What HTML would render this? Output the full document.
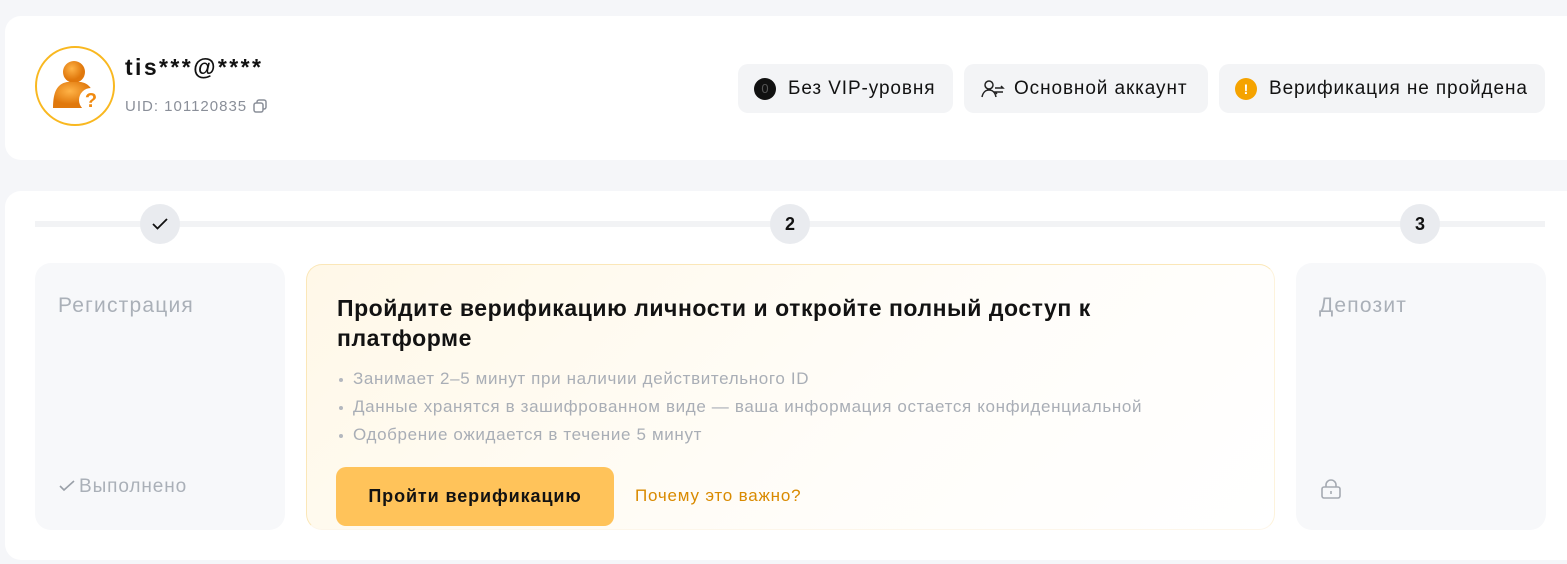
<!DOCTYPE html>
<html><head><meta charset="utf-8"><style>
*{box-sizing:border-box;margin:0;padding:0}
body{width:1567px;height:564px;background:#f5f6f9;font-family:"Liberation Sans",sans-serif;position:relative;overflow:hidden;color:#121212}
.card{position:absolute;background:#fff;border-radius:16px}
.badge{position:absolute;top:64px;height:49px;background:#f3f4f6;border-radius:10px;font-size:19px;letter-spacing:0.9px;display:flex;align-items:center;padding-left:16px}
.abs{position:absolute}
.circ{position:absolute;top:204px;width:40px;height:40px;border-radius:50%;background:#e9ebef;display:flex;align-items:center;justify-content:center;font-size:18px;font-weight:bold}
.box{position:absolute;top:263px;height:267px;background:#f7f8fa;border-radius:16px}
.g{color:#aab0b8}
li{list-style:none;position:relative;padding-left:16px;height:28px;line-height:28px}
li:before{content:"";position:absolute;left:2px;top:13px;width:4px;height:4px;border-radius:50%;background:#b4b8bf}
</style></head><body>
<div class="card" style="left:5px;top:16px;width:1580px;height:144px"></div>
<div class="abs" style="left:35px;top:46px;width:80px;height:80px;border-radius:50%;border:2px solid #f9b820;background:#fff"></div>
<svg class="abs" style="left:45px;top:56px" width="62" height="62" viewBox="0 0 62 62">
<defs><radialGradient id="o" cx="40%" cy="35%"><stop offset="0" stop-color="#ffb347"/><stop offset="1" stop-color="#e0780c"/></radialGradient></defs>
<circle cx="29" cy="16" r="11" fill="url(#o)"/><path d="M22 26 L36 26 C46 28 50 36 50 52 L8 52 C8 36 12 28 22 26 Z" fill="url(#o)"/>
<circle cx="46" cy="44" r="12" fill="#fff"/><text x="46" y="51" text-anchor="middle" font-size="20" font-weight="bold" fill="#f08a10" font-family="Liberation Sans">?</text></svg>
<div class="abs" style="left:125px;top:54px;font-size:23px;font-weight:bold;letter-spacing:2.4px">tis***@****</div>
<div class="abs" style="left:125px;top:98px;font-size:15px;color:#8a8f99;letter-spacing:1px">UID: 101120835 <svg width="16" height="16" viewBox="0 0 16 16" style="vertical-align:-3px"><rect x="5" y="2" width="9" height="9" rx="2" fill="none" stroke="#8a8f99" stroke-width="1.5"/><rect x="2" y="5" width="9" height="9" rx="2" fill="#fff" stroke="#8a8f99" stroke-width="1.5"/></svg></div>
<div class="badge" style="left:738px;width:215px"><span style="width:22px;height:22px;border-radius:50%;background:#111;display:inline-block;margin-right:12px;text-align:center;color:#555;font-size:13px;line-height:22px;letter-spacing:0">0</span>Без VIP-уровня</div>
<div class="badge" style="left:964px;width:244px"><svg width="26" height="22" viewBox="0 0 26 22" style="margin-right:8px"><circle cx="9" cy="7" r="4" fill="none" stroke="#222" stroke-width="1.5"/><path d="M2 19c1-5 4-7 7-7s6 2 7 7" fill="none" stroke="#222" stroke-width="1.5"/><path d="M15 10h8l-2-2M23 14h-8l2 2" fill="none" stroke="#222" stroke-width="1.5"/></svg>Основной аккаунт</div>
<div class="badge" style="left:1219px;width:326px"><span style="width:22px;height:22px;border-radius:50%;background:#f5a300;display:inline-block;margin-right:12px;text-align:center;color:#fff;font-size:14px;font-weight:bold;line-height:22px;letter-spacing:0">!</span>Верификация не пройдена</div>

<div class="card" style="left:5px;top:191px;width:1580px;height:369px"></div>
<div class="abs" style="left:35px;top:221px;width:1510px;height:6px;background:#f2f3f5"></div>
<div class="circ" style="left:140px"><svg width="16" height="12" viewBox="0 0 16 12"><path d="M1 6l4.5 4.5L15 1" fill="none" stroke="#111" stroke-width="1.8"/></svg></div>
<div class="circ" style="left:770px">2</div>
<div class="circ" style="left:1400px">3</div>

<div class="box" style="left:35px;width:250px">
<div class="abs g" style="left:23px;top:31px;font-size:21px;letter-spacing:1.2px">Регистрация</div>
<div class="abs g" style="left:23px;top:213px;font-size:19px;letter-spacing:0.9px"><svg width="18" height="14" viewBox="0 0 18 14" style="margin-right:3px"><path d="M2 8l4 4L16 3" fill="none" stroke="#9aa0a8" stroke-width="1.6"/></svg>Выполнено</div>
</div>
<div class="box" style="left:306px;top:264px;width:969px;height:266px;background:linear-gradient(135deg,#fff8e8,#fffdf9 60%,#fff);border:1px solid #fbe7b8;border-right-color:#fdf3dc;border-bottom-color:#fdf6ea">
<div class="abs" style="left:30px;top:28px;font-size:23px;font-weight:bold;line-height:30px;width:880px;letter-spacing:0.55px">Пройдите верификацию личности и откройте полный доступ к платформе</div>
<ul class="abs" style="left:30px;top:100px;font-size:17px;color:#a9aeb6;letter-spacing:0.65px;white-space:nowrap">
<li>Занимает 2–5 минут при наличии действительного ID</li>
<li>Данные хранятся в зашифрованном виде — ваша информация остается конфиденциальной</li>
<li>Одобрение ожидается в течение 5 минут</li></ul>
<div class="abs" style="left:29px;top:202px;width:278px;height:59px;background:#ffc35a;border-radius:10px;font-size:18px;font-weight:bold;letter-spacing:0.9px;display:flex;align-items:center;justify-content:center">Пройти верификацию</div>
<div class="abs" style="left:328px;top:221px;font-size:17px;color:#d98a00;letter-spacing:0.8px">Почему это важно?</div>
</div>
<div class="box" style="left:1296px;width:250px">
<div class="abs g" style="left:23px;top:31px;font-size:21px;letter-spacing:1.2px">Депозит</div>
<svg class="abs" style="left:24px;top:215px" width="22" height="22" viewBox="0 0 22 22"><rect x="2" y="9" width="18" height="11" rx="2" fill="none" stroke="#a5aab2" stroke-width="1.6"/><path d="M6 9V7a5 5 0 0 1 10 0v2" fill="none" stroke="#a5aab2" stroke-width="1.6"/><path d="M11 13v3" stroke="#a5aab2" stroke-width="1.6"/></svg>
</div>
</body></html>
